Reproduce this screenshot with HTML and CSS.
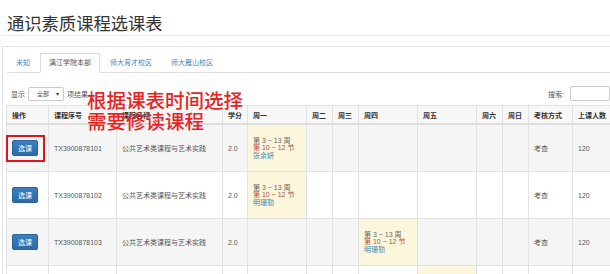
FILE: index.html
```html
<!DOCTYPE html>
<html lang="zh-CN">
<head>
  <meta charset="UTF-8">
  <title>通识素质课程选课表</title>
  <link rel="stylesheet" href="styles.css">
</head>
<body>
  <h1 class="page-title">通识素质课程选课表</h1>

  <div class="panel">
    <ul class="tabs">
      <li><a href="#">未知</a></li>
      <li class="active"><a href="#">漓江学院本部</a></li>
      <li><a href="#">师大育才校区</a></li>
      <li><a href="#">师大雁山校区</a></li>
    </ul>

    <div class="toolbar">
      <div class="length">
        显示
        <span class="select">全部 <span class="caret">▾</span></span>
        项结果
      </div>
      <div class="search">
        搜索:
        <span class="search-input"></span>
      </div>
    </div>

    <table class="course-table">
      <colgroup>
        <col style="width:42px">
        <col style="width:68px">
        <col style="width:106px">
        <col style="width:25px">
        <col style="width:59px">
        <col style="width:26px">
        <col style="width:26px">
        <col style="width:59px">
        <col style="width:59px">
        <col style="width:26px">
        <col style="width:26px">
        <col style="width:44px">
        <col style="width:60px">
      </colgroup>
      <thead>
        <tr>
          <th>操作</th>
          <th>课程序号</th>
          <th>课程名称</th>
          <th>学分</th>
          <th>周一</th>
          <th>周二</th>
          <th>周三</th>
          <th>周四</th>
          <th>周五</th>
          <th>周六</th>
          <th>周日</th>
          <th>考核方式</th>
          <th>上课人数</th>
        </tr>
      </thead>
      <tbody>
        <tr class="odd">
          <td><span class="marked"><button class="btn">选课</button></span></td>
          <td>TX3900878101</td>
          <td>公共艺术类课程与艺术实践</td>
          <td>2.0</td>
          <td class="slot">
            <div class="weeks">第 3 ~ 13 周</div>
            <div class="periods">第 10 ~ 12 节</div>
            <div class="teacher">张余妍</div>
          </td>
          <td></td><td></td><td></td><td></td><td></td><td></td>
          <td>考查</td>
          <td>120</td>
        </tr>
        <tr>
          <td><button class="btn">选课</button></td>
          <td>TX3900878102</td>
          <td>公共艺术类课程与艺术实践</td>
          <td>2.0</td>
          <td class="slot">
            <div class="weeks">第 3 ~ 13 周</div>
            <div class="periods">第 10 ~ 12 节</div>
            <div class="teacher">明珊勤</div>
          </td>
          <td></td><td></td><td></td><td></td><td></td><td></td>
          <td>考查</td>
          <td>120</td>
        </tr>
        <tr class="odd">
          <td><button class="btn">选课</button></td>
          <td>TX3900878103</td>
          <td>公共艺术类课程与艺术实践</td>
          <td>2.0</td>
          <td></td><td></td><td></td>
          <td class="slot">
            <div class="weeks">第 3 ~ 13 周</div>
            <div class="periods">第 10 ~ 12 节</div>
            <div class="teacher">明珊勤</div>
          </td>
          <td></td><td></td><td></td>
          <td>考查</td>
          <td>120</td>
        </tr>
        <tr>
          <td><button class="btn">选课</button></td>
          <td>TX3900878104</td>
          <td>公共艺术类课程与艺术实践</td>
          <td>2.0</td>
          <td></td><td></td><td></td><td></td>
          <td class="slot">
            <div class="weeks">第 3 ~ 13 周</div>
            <div class="periods">第 10 ~ 12 节</div>
            <div class="teacher">明珊勤</div>
          </td>
          <td></td><td></td>
          <td>考查</td>
          <td>120</td>
        </tr>
      </tbody>
    </table>
  </div>

  <!-- annotation over the screenshot -->
  <div class="note">根据课表时间选择<br>需要修读课程</div>
</body>
</html>
```

FILE: styles.css
```css
html, body {
  margin: 0;
  overflow: hidden;
}

body {
  position: relative;
  width: 610px;
  height: 274px;
  background: #ffffff;
  font-family: "Liberation Sans", "Noto Sans CJK SC", sans-serif;
  font-size: 7px;
  color: #555;
}

.page-title {
  margin: 0 0 10px 0;
  padding: 11px 0 0 7px;
  font-family: "Noto Sans CJK SC", sans-serif;
  font-size: 17.3px;
  font-weight: normal;
  line-height: 24px;
  color: #333;
  border-bottom: 1px solid #eee;
}

.panel {
  margin-left: 2px;
  border-top: 1px solid #e3e3e3;
  border-left: 1px solid #e3e3e3;
  padding: 6px 0 0 3px;
}

.tabs {
  list-style: none;
  margin: 0 0 0 1px;
  padding: 0;
  display: flex;
  border-bottom: 1px solid #ddd;
}

.tabs li {
  margin-bottom: -1px;
  margin-right: 1px;
}

.tabs a {
  display: block;
  padding: 0 8px;
  line-height: 18px;
  border: 1px solid transparent;
  color: #4a84bd;
  text-decoration: none;
}

.tabs .active a {
  color: #555;
  background: #fff;
  border-color: #ddd #ddd #fff;
}

.toolbar {
  display: flex;
  justify-content: space-between;
  align-items: center;
  margin-top: 13px;
  height: 15px;
  color: #555;
}

.length {
  display: flex;
  align-items: center;
  gap: 2px;
  margin-left: 5px;
}

.select {
  display: inline-flex;
  align-items: center;
  justify-content: space-between;
  box-sizing: border-box;
  width: 36px;
  height: 14px;
  padding: 0 4px 0 8px;
  border: 1px solid #ccc;
  border-radius: 2px;
  font-size: 6px;
  margin: 0 1px;
}

.caret {
  font-size: 6px;
  color: #444;
}

.search {
  display: flex;
  align-items: center;
  gap: 6px;
}

.search-input {
  display: block;
  width: 40px;
  height: 15px;
  box-sizing: border-box;
  border: 1px solid #ccc;
  border-radius: 2px;
}

.course-table {
  margin-top: 4px;
  table-layout: fixed;
  width: 626px;
  border-collapse: collapse;
}

.course-table th,
.course-table td {
  border: 1px solid #e2e2e2;
  padding: 0 5px;
  text-align: left;
  vertical-align: middle;
  white-space: nowrap;
  overflow: visible;
}

.course-table th {
  height: 17px;
  font-weight: bold;
  color: #333;
  background: #f7f7f7;
  border-bottom: 2px solid #ddd;
}

.course-table td {
  height: 46px;
  color: #555;
}

.course-table tr.odd td {
  background: #f5f5f5;
}

.course-table td.slot,
.course-table tr.odd td.slot {
  background: #fcf6dc;
  line-height: 7.6px;
}

.weeks {
  color: #666;
}

.periods {
  color: #b8513f;
}

.teacher {
  color: #3f86ad;
}

.btn {
  display: block;
  width: 26px;
  height: 16px;
  padding: 0;
  border: 1px solid #2a6496;
  border-radius: 2px;
  background: linear-gradient(#3b7fc0, #2c6aa6);
  color: #fff;
  font-family: "Noto Sans CJK SC", sans-serif;
  font-size: 7px;
  cursor: pointer;
}

.marked {
  position: relative;
  display: block;
  width: 26px;
}

.marked::after {
  content: "";
  position: absolute;
  left: -6px;
  right: -7px;
  top: -5px;
  bottom: -6px;
  border: 2px solid #e0141c;
}

.note {
  position: absolute;
  left: 87px;
  top: 89px;
  font-family: "Noto Sans CJK SC", sans-serif;
  font-size: 19.5px;
  font-weight: 500;
  line-height: 21px;
  color: #e8231f;
}
```
